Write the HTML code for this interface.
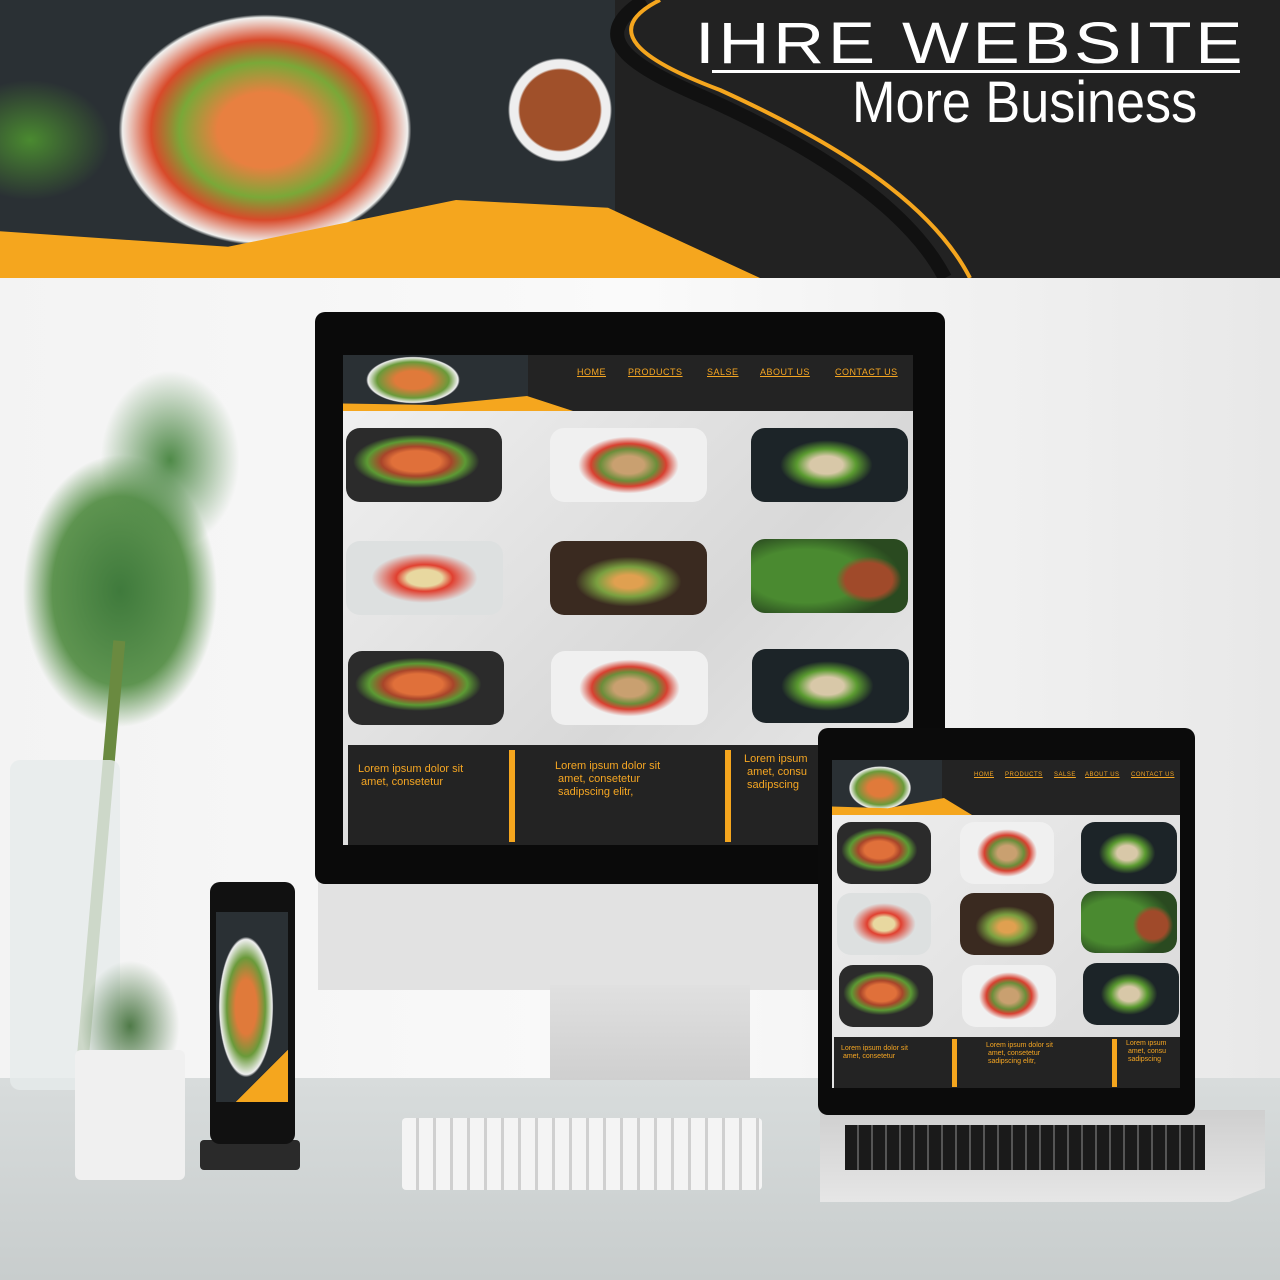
<!DOCTYPE html>
<html><head><meta charset="utf-8"><style>
*{margin:0;padding:0;box-sizing:border-box}
body{width:1280px;height:1280px;overflow:hidden;position:relative;background:#eceded;font-family:"Liberation Sans","DejaVu Sans",sans-serif}
.a{position:absolute}
.f1{background:radial-gradient(ellipse 45% 40% at 45% 45%,#e0703a 0 35%,#a8452a 50%,#5c9a34 70%,#2b2b2b 90%),#333}
.f2{background:radial-gradient(ellipse 40% 48% at 50% 50%,#c9a070 0 25%,#6b8e3a 45%,#d84030 60%,#f0f0f0 80%),#cfd2d4}
.f3{background:radial-gradient(ellipse 42% 48% at 48% 50%,#d8c8a8 0 25%,#5a9a30 45%,#1c2428 70%),#6a4a2a}
.f4{background:radial-gradient(ellipse 45% 45% at 50% 50%,#e8d8a0 0 25%,#e04030 40%,#dde0e0 75%),#e0e2e4}
.f5{background:radial-gradient(ellipse 45% 45% at 50% 55%,#e0a050 0 20%,#7aa040 45%,#3a2a20 75%),#5a3a20}
.f6{background:radial-gradient(ellipse 30% 45% at 75% 55%,#a04a2a 0 50%,transparent 70%),radial-gradient(ellipse 60% 60% at 35% 50%,#4a8a30 0 60%,#2a4a20),#3a5a2a}
.r{border-radius:14px}
.nav{color:#f5a623;text-decoration:underline;font-size:9px;letter-spacing:.5px}
.ft{color:#f5a623;font-size:11px;line-height:13px}
</style></head><body>
<div class="a" style="left:0;top:0;width:1280px;height:278px;background:#222"></div>
<div class="a" style="left:0;top:0;width:615px;height:278px;background:radial-gradient(ellipse 190px 150px at 265px 130px,#e88040 0 25%,#7aa838 45%,#d84a2a 60%,#f0f0ee 75%,transparent 77%),radial-gradient(circle at 560px 110px,#a0502a 0 40px,#eee 42px 50px,transparent 52px),radial-gradient(ellipse 80px 60px at 30px 140px,#4a8a30,transparent),#2a3034"></div>
<div class="a" style="left:0;top:200px;width:760px;height:78px;background:#f5a61e;clip-path:polygon(0 40%,30% 60%,60% 0,80% 10%,100% 100%,0 100%)"></div>
<svg class="a" style="left:600px;top:0" width="420" height="278"><path d="M45 0 C-20 40 40 70 110 100 C220 150 310 210 345 278" stroke="#111" stroke-width="14" fill="none"/><path d="M60 0 C0 30 40 60 120 90 C230 140 330 200 370 278" stroke="#f5a61e" stroke-width="4" fill="none"/></svg>
<div class="a" style="left:695px;top:14px;color:#fff;font-size:58px;letter-spacing:3px;line-height:60px;transform:scaleX(1.22);transform-origin:left">IHRE WEBSITE</div>
<div class="a" style="left:712px;top:70px;width:528px;height:3px;background:#fff"></div>
<div class="a" style="left:852px;top:70px;color:#fff;font-size:58px;line-height:66px;transform:scaleX(.9);transform-origin:left">More Business</div>
<div class="a" style="left:0;top:278px;width:1280px;height:800px;background:linear-gradient(90deg,#f3f3f3,#fafafa 50%,#e8e8e8)"></div>
<div class="a" style="left:0;top:1078px;width:1280px;height:202px;background:linear-gradient(#d8dcdc,#c8cdcd)"></div>
<div class="a" style="left:0;top:360px;width:300px;height:420px;background:radial-gradient(ellipse 45% 45% at 40% 55%,#3f7a3c,#5e9450 50%,transparent 72%)"></div>
<div class="a" style="left:100px;top:370px;width:140px;height:180px;background:radial-gradient(ellipse at 50% 50%,#4f8a48,transparent 70%)"></div>
<div class="a" style="left:95px;top:640px;width:12px;height:420px;background:#6a8a40;transform:rotate(5deg)"></div>
<div class="a" style="left:10px;top:760px;width:110px;height:330px;background:rgba(230,235,235,.8);border-radius:10px"></div>
<div class="a" style="left:80px;top:960px;width:100px;height:110px;background:radial-gradient(ellipse at 50% 60%,#4f7a48,transparent 70%)"></div>
<div class="a" style="left:75px;top:1050px;width:110px;height:130px;background:#f0f0f0;border-radius:6px"></div>
<div class="a" style="left:318px;top:880px;width:620px;height:110px;background:#e2e2e2"></div>
<div class="a" style="left:550px;top:985px;width:200px;height:95px;background:linear-gradient(#e0e0e0,#cfcfcf)"></div>
<div class="a" style="left:315px;top:312px;width:630px;height:572px;background:#0a0a0a;border-radius:10px"></div>
<div class="a" style="left:343px;top:355px;width:570px;height:490px;background:linear-gradient(135deg,#f2f2f2,#d8d8d8 60%,#ececec)"></div>
<div class="a" style="left:343px;top:355px;width:570px;height:56px;background:#232323"></div>
<div class="a" style="left:343px;top:355px;width:185px;height:56px;background:radial-gradient(ellipse 60px 30px at 70px 25px,#e07a3a 0 30%,#6a9a3a 60%,#eee 75%,transparent 78%),#2a3034"></div>
<div class="a" style="left:343px;top:396px;width:230px;height:15px;background:#f5a61e;clip-path:polygon(0 50%,40% 60%,80% 0,100% 100%,0 100%)"></div>
<div class="a nav" style="left:577px;top:367px">HOME</div>
<div class="a nav" style="left:628px;top:367px">PRODUCTS</div>
<div class="a nav" style="left:707px;top:367px">SALSE</div>
<div class="a nav" style="left:760px;top:367px">ABOUT US</div>
<div class="a nav" style="left:835px;top:367px">CONTACT US</div>
<div class="a r f1" style="left:346px;top:428px;width:156px;height:74px"></div>
<div class="a r f2" style="left:550px;top:428px;width:157px;height:74px"></div>
<div class="a r f3" style="left:751px;top:428px;width:157px;height:74px"></div>
<div class="a r f4" style="left:346px;top:541px;width:157px;height:74px"></div>
<div class="a r f5" style="left:550px;top:541px;width:157px;height:74px"></div>
<div class="a r f6" style="left:751px;top:539px;width:157px;height:74px"></div>
<div class="a r f1" style="left:348px;top:651px;width:156px;height:74px"></div>
<div class="a r f2" style="left:551px;top:651px;width:157px;height:74px"></div>
<div class="a r f3" style="left:752px;top:649px;width:157px;height:74px"></div>
<div class="a" style="left:348px;top:745px;width:470px;height:100px;background:#232323"></div>
<div class="a" style="left:509px;top:750px;width:6px;height:92px;background:#f5a61e"></div>
<div class="a" style="left:725px;top:750px;width:6px;height:92px;background:#f5a61e"></div>
<div class="a ft" style="left:358px;top:763px">Lorem ipsum dolor sit<br>&nbsp;amet, consetetur</div>
<div class="a ft" style="left:555px;top:760px">Lorem ipsum dolor sit<br>&nbsp;amet, consetetur<br>&nbsp;sadipscing elitr,</div>
<div class="a ft" style="left:744px;top:753px;width:74px;overflow:hidden;white-space:nowrap">Lorem ipsum<br>&nbsp;amet, consu<br>&nbsp;sadipscing</div>
<div class="a" style="left:402px;top:1118px;width:360px;height:72px;background:repeating-linear-gradient(90deg,#f4f4f4 0 14px,#d0d0d0 14px 17px),#eee;border-radius:4px"></div>
<div class="a" style="left:200px;top:1140px;width:100px;height:30px;background:#2a2a2a;border-radius:4px"></div>
<div class="a" style="left:210px;top:882px;width:85px;height:262px;background:#111;border-radius:10px"></div>
<div class="a" style="left:216px;top:912px;width:72px;height:190px;background:radial-gradient(ellipse 35px 90px at 30px 95px,#e07a3a 0 30%,#6a9a3a 55%,#eee 75%,transparent 78%),linear-gradient(135deg,#2a3034 80%,#f5a61e 80%)"></div>
<div class="a" style="left:820px;top:1110px;width:445px;height:92px;background:linear-gradient(#cfcfcf,#e6e6e6);clip-path:polygon(0 0,100% 0,100% 85%,92% 100%,0 100%)"></div>
<div class="a" style="left:845px;top:1125px;width:360px;height:45px;background:repeating-linear-gradient(90deg,#1a1a1a 0 12px,#555 12px 14px)"></div>
<div class="a" style="left:818px;top:728px;width:377px;height:387px;background:#0b0b0b;border-radius:10px"></div>
<div class="a" style="left:832px;top:760px;width:348px;height:328px;background:linear-gradient(135deg,#f0f0f0,#d8d8d8)"></div>
<div class="a" style="left:832px;top:760px;width:348px;height:55px;background:#232323"></div>
<div class="a" style="left:832px;top:760px;width:110px;height:55px;background:radial-gradient(ellipse 40px 28px at 48px 28px,#e07a3a 0 30%,#6a9a3a 60%,#eee 75%,transparent 78%),#2a3034"></div>
<div class="a" style="left:832px;top:798px;width:140px;height:17px;background:#f5a61e;clip-path:polygon(0 50%,40% 60%,80% 0,100% 100%,0 100%)"></div>
<div class="a nav" style="left:974px;top:772px;font-size:6px">HOME</div>
<div class="a nav" style="left:1005px;top:772px;font-size:6px">PRODUCTS</div>
<div class="a nav" style="left:1054px;top:772px;font-size:6px">SALSE</div>
<div class="a nav" style="left:1085px;top:772px;font-size:6px">ABOUT US</div>
<div class="a nav" style="left:1131px;top:772px;font-size:6px">CONTACT US</div>
<div class="a r f1" style="left:837px;top:822px;width:94px;height:62px"></div>
<div class="a r f2" style="left:960px;top:822px;width:94px;height:62px"></div>
<div class="a r f3" style="left:1081px;top:822px;width:96px;height:62px"></div>
<div class="a r f4" style="left:837px;top:893px;width:94px;height:62px"></div>
<div class="a r f5" style="left:960px;top:893px;width:94px;height:62px"></div>
<div class="a r f6" style="left:1081px;top:891px;width:96px;height:62px"></div>
<div class="a r f1" style="left:839px;top:965px;width:94px;height:62px"></div>
<div class="a r f2" style="left:962px;top:965px;width:94px;height:62px"></div>
<div class="a r f3" style="left:1083px;top:963px;width:96px;height:62px"></div>
<div class="a" style="left:834px;top:1037px;width:346px;height:51px;background:#232323"></div>
<div class="a" style="left:952px;top:1039px;width:5px;height:48px;background:#f5a61e"></div>
<div class="a" style="left:1112px;top:1039px;width:5px;height:48px;background:#f5a61e"></div>
<div class="a ft" style="left:841px;top:1045px;font-size:7px;line-height:8px">Lorem ipsum dolor sit<br>&nbsp;amet, consetetur</div>
<div class="a ft" style="left:986px;top:1042px;font-size:7px;line-height:8px">Lorem ipsum dolor sit<br>&nbsp;amet, consetetur<br>&nbsp;sadipscing elitr,</div>
<div class="a ft" style="left:1126px;top:1040px;font-size:7px;line-height:8px;width:54px;overflow:hidden;white-space:nowrap">Lorem ipsum<br>&nbsp;amet, consu<br>&nbsp;sadipscing</div>
</body></html>
